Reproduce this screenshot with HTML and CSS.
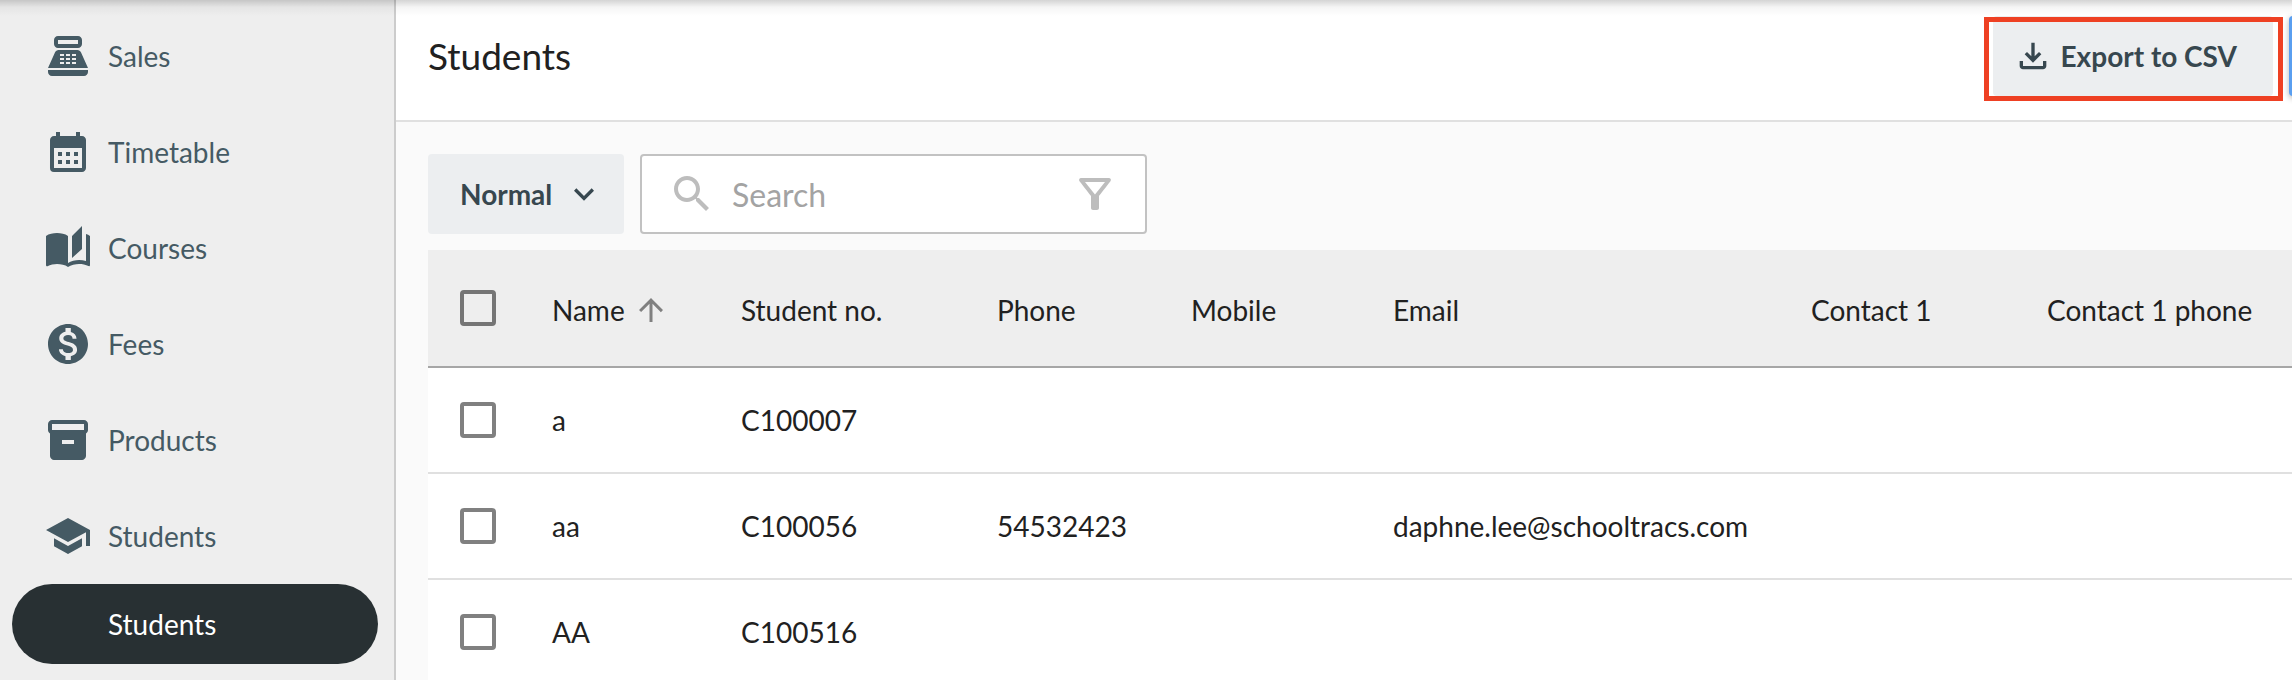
FILE: index.html
```html
<!DOCTYPE html>
<html lang="en">
<head>
  <meta charset="UTF-8">
  <meta name="viewport" content="width=device-width, initial-scale=1.0">
  <title>Students</title>
  <link rel="stylesheet" href="styles.css">
</head>
<body>
  <div class="topbar-shadow"></div>

  <nav class="sidebar">
    <a href="#sales" class="nav-item">
      <svg class="icon" viewBox="0 0 24 24"><path fill-rule="evenodd" d="M17 2H7c-1.1 0-2 .9-2 2v2c0 1.1.9 2 2 2h10c1.1 0 2-.9 2-2V4c0-1.1-.9-2-2-2zm0 4H7V4h10v2zm3 16H4c-1.1 0-2-.9-2-2v-1h20v1c0 1.1-.9 2-2 2zM18.53 10.19C18.21 9.47 17.49 9 16.7 9H7.3c-.79 0-1.51.47-1.83 1.19L2 18h20l-3.47-7.81zM8 11h2v1H8zM11 11h2v1h-2zM14 11h2v1h-2zM8 13h2v1H8zM11 13h2v1h-2zM14 13h2v1h-2zM8 15h2v1H8zM11 15h2v1h-2zM14 15h2v1h-2z"/></svg>
      Sales
    </a>
    <a href="#timetable" class="nav-item">
      <svg class="icon" viewBox="0 0 24 24"><path d="M19 4h-1V2h-2v2H8V2H6v2H5c-1.11 0-1.99.9-1.99 2L3 20a2 2 0 0 0 2 2h14c1.1 0 2-.9 2-2V6c0-1.1-.9-2-2-2zm0 16H5V10h14v10zM9 14H7v-2h2v2zm4 0h-2v-2h2v2zm4 0h-2v-2h2v2zm-8 4H7v-2h2v2zm4 0h-2v-2h2v2zm4 0h-2v-2h2v2z"/></svg>
      Timetable
    </a>
    <a href="#courses" class="nav-item">
      <svg class="icon" viewBox="0 0 24 24"><path d="M19 1l-5 5v11l5-4.5V1zM1 6v14.65c0 .25.25.5.5.5.1 0 .15-.05.25-.05C3.1 20.45 5.05 20 6.5 20c1.95 0 4.05.4 5.5 1.5V6c-1.45-1.1-3.55-1.5-5.5-1.5S2.45 4.9 1 6zm22 13.5V6c-.6-.45-1.25-.75-2-1v13.5c-1.1-.35-2.3-.5-3.5-.5-1.7 0-4.15.65-5.5 1.5v2c1.35-.85 3.8-1.5 5.5-1.5 1.65 0 3.35.3 4.75 1.05.1.05.15.05.25.05.25 0 .5-.25.5-.5v-1.1z"/></svg>
      Courses
    </a>
    <a href="#fees" class="nav-item">
      <svg class="icon" viewBox="0 0 24 24"><path d="M12 2C6.48 2 2 6.48 2 12s4.48 10 10 10 10-4.48 10-10S17.52 2 12 2zm1.41 16.09V20h-2.67v-1.93c-1.71-.36-3.16-1.46-3.27-3.4h1.96c.1 1.05.82 1.87 2.65 1.87 1.96 0 2.4-.98 2.4-1.59 0-.83-.44-1.61-2.67-2.14-2.48-.6-4.18-1.62-4.18-3.67 0-1.72 1.39-2.84 3.11-3.21V4h2.67v1.95c1.86.45 2.79 1.86 2.85 3.39H14.3c-.05-1.11-.64-1.87-2.22-1.87-1.5 0-2.4.68-2.4 1.64 0 .84.65 1.39 2.67 1.91s4.18 1.39 4.18 3.91c-.01 1.83-1.38 2.83-3.12 3.16z"/></svg>
      Fees
    </a>
    <a href="#products" class="nav-item">
      <svg class="icon" viewBox="0 0 24 24"><path d="M20 2H4c-1 0-2 .9-2 2v3.01c0 .72.43 1.34 1 1.69V20c0 1.1 1.1 2 2 2h14c.9 0 2-.9 2-2V8.7c.57-.35 1-.97 1-1.69V4c0-1.1-1-2-2-2zm-5 12H9v-2h6v2zm5-7H4V4h16v3z"/></svg>
      Products
    </a>
    <a href="#students" class="nav-item">
      <svg class="icon" viewBox="0 0 24 24"><path d="M5 13.18v4L12 21l7-3.82v-4L12 17l-7-3.82zM12 3L1 9l11 6 9-4.91V17h2V9L12 3z"/></svg>
      Students
    </a>
    <a href="#students-list" class="nav-sub active">Students</a>
  </nav>

  <main class="main">
    <header class="page-header">
      <h1>Students</h1>
      <div class="actions">
        <button type="button" class="btn export-btn">
          <svg class="icon-sm" viewBox="0 0 24 24"><path d="M12 16l-5-5 1.4-1.45 2.6 2.6V4h2v8.15l2.6-2.6L17 11l-5 5zm-6 4q-.825 0-1.412-.587Q4 18.825 4 18v-3h2v3h12v-3h2v3q0 .825-.587 1.413Q18.825 20 18 20z"/></svg>
          Export to CSV
          <span class="highlight"></span>
        </button>
        <button type="button" class="btn primary-btn" aria-label="Add student"></button>
      </div>
    </header>

    <section class="content">
      <div class="toolbar">
        <div class="status-select">
          <select class="btn" aria-label="Status">
            <option>Normal</option>
          </select>
          <svg class="icon-sm" viewBox="0 0 24 24"><path d="M7.41 8.59 12 13.17l4.59-4.58L18 10l-6 6-6-6z"/></svg>
        </div>
        <div class="search-box">
          <svg class="icon" viewBox="0 0 24 24"><path d="M15.5 14h-.79l-.28-.27C15.41 12.59 16 11.11 16 9.5 16 5.91 13.09 3 9.5 3S3 5.91 3 9.5 5.91 16 9.5 16c1.61 0 3.09-.59 4.23-1.57l.27.28v.79l5 4.99L20.49 19l-4.99-5zm-6 0C7.01 14 5 11.99 5 9.5S7.01 5 9.5 5 14 7.01 14 9.5 11.99 14 9.5 14z"/></svg>
          <input type="text" placeholder="Search" aria-label="Search">
          <button type="button" class="filter-btn" aria-label="Filter">
            <svg class="icon" viewBox="0 0 24 24"><path d="M7 6h10l-5.01 6.3L7 6zm-2.75-.39C6.27 8.2 10 13 10 13v6c0 .55.45 1 1 1h2c.55 0 1-.45 1-1v-6s3.72-4.8 5.74-7.39A.998.998 0 0 0 18.95 4H5.04c-.83 0-1.3.95-.79 1.61z"/></svg>
          </button>
        </div>
      </div>

      <table class="students">
        <colgroup>
          <col class="col-check">
          <col class="col-name">
          <col class="col-no">
          <col class="col-phone">
          <col class="col-mobile">
          <col class="col-email">
          <col class="col-contact">
          <col>
        </colgroup>
        <thead>
          <tr>
            <td><input type="checkbox" aria-label="Select all"></td>
            <th>
              <span class="sort">Name
                <svg class="icon-sort" viewBox="0 0 24 24"><path d="M4 12l1.41 1.41L11 7.83V20h2V7.83l5.58 5.59L20 12l-8-8-8 8z"/></svg>
              </span>
            </th>
            <th>Student no.</th>
            <th>Phone</th>
            <th>Mobile</th>
            <th>Email</th>
            <th>Contact 1</th>
            <th>Contact 1 phone</th>
          </tr>
        </thead>
        <tbody>
          <tr>
            <td><input type="checkbox" aria-label="Select a"></td>
            <td>a</td>
            <td>C100007</td>
            <td></td>
            <td></td>
            <td></td>
            <td></td>
            <td></td>
          </tr>
          <tr>
            <td><input type="checkbox" aria-label="Select aa"></td>
            <td>aa</td>
            <td>C100056</td>
            <td>54532423</td>
            <td></td>
            <td>daphne.lee@schooltracs.com</td>
            <td></td>
            <td></td>
          </tr>
          <tr>
            <td><input type="checkbox" aria-label="Select AA"></td>
            <td>AA</td>
            <td>C100516</td>
            <td></td>
            <td></td>
            <td></td>
            <td></td>
            <td></td>
          </tr>
        </tbody>
      </table>
    </section>
  </main>
</body>
</html>
```

FILE: styles.css
```css
* {
  box-sizing: border-box;
}

body {
  margin: 0;
  display: flex;
  height: 100vh;
  overflow: hidden;
  font-family: Lato, "Liberation Sans", sans-serif;
  font-size: 28px;
  color: #212121;
  background: #fafafa;
}

button, input, select {
  font-family: inherit;
  font-size: inherit;
}

svg {
  fill: currentColor;
  flex-shrink: 0;
}

.icon {
  width: 48px;
  height: 48px;
}

.icon-sm {
  width: 40px;
  height: 40px;
}

/* shadow of the app bar above the page */
.topbar-shadow {
  position: absolute;
  top: 0;
  left: 0;
  right: 0;
  height: 16px;
  background: linear-gradient(rgba(0, 0, 0, 0.17), rgba(0, 0, 0, 0.04) 45%, transparent);
  pointer-events: none;
  z-index: 10;
}

/* sidebar */
.sidebar {
  width: 396px;
  flex-shrink: 0;
  padding-top: 8px;
  background: #eee;
  border-right: 2px solid #ccc;
}

.nav-item {
  display: flex;
  align-items: center;
  gap: 16px;
  height: 96px;
  padding: 0 44px;
  color: #455a64;
  text-decoration: none;
}

.nav-sub {
  display: flex;
  align-items: center;
  height: 80px;
  margin: 0 16px 0 12px;
  padding-left: 96px;
  border-radius: 40px;
  color: #455a64;
  text-decoration: none;
}

.nav-sub.active {
  background: #283033;
  color: #fff;
}

/* page header */
.main {
  flex: 1;
  min-width: 0;
  overflow: hidden;
}

.page-header {
  display: flex;
  align-items: flex-start;
  justify-content: space-between;
  height: 122px;
  padding: 16px 0 0 32px;
  background: #fff;
  border-bottom: 2px solid #e0e0e0;
}

.page-header h1 {
  margin: 0;
  font-size: 37px;
  font-weight: 400;
  line-height: 80px;
}

.actions {
  display: flex;
  gap: 16px;
}

.btn {
  height: 80px;
  border: none;
  border-radius: 4px;
  background: #eceef0;
  color: #37474f;
  font-weight: 700;
  cursor: pointer;
}

.export-btn {
  position: relative;
  display: flex;
  align-items: center;
  gap: 8px;
  padding: 0 36px 0 20px;
}

.highlight {
  position: absolute;
  top: 1px;
  right: -10px;
  bottom: -5px;
  left: -9px;
  border: 5px solid #ee4023;
}

/* the rest of this button runs past the right edge */
.primary-btn {
  width: 160px;
  margin-right: -157px;
  background: #5a9ff0;
  box-shadow: 0 2px 6px rgba(0, 0, 0, 0.3);
}

/* toolbar */
.content {
  padding: 32px 0 0 32px;
}

.toolbar {
  display: flex;
  gap: 16px;
  margin-bottom: 16px;
}

.status-select {
  position: relative;
}

.status-select select {
  appearance: none;
  width: 196px;
  padding: 0 64px 0 32px;
}

.status-select svg {
  position: absolute;
  top: 20px;
  right: 20px;
  color: #37474f;
  pointer-events: none;
}

.search-box {
  display: flex;
  align-items: center;
  gap: 16px;
  width: 507px;
  height: 80px;
  padding: 0 26px;
  border: 2px solid #c2c2c2;
  border-radius: 4px;
  background: #fff;
  color: #bdbdbd;
}

.search-box input {
  flex: 1;
  min-width: 0;
  padding: 0;
  border: none;
  outline: none;
  font-size: 32px;
  color: #212121;
}

.search-box input::placeholder {
  color: #a3a3a3;
}

.filter-btn {
  display: flex;
  padding: 0;
  border: none;
  background: none;
  color: inherit;
  cursor: pointer;
}

/* table */
.students {
  width: 100%;
  table-layout: fixed;
  border-collapse: separate;
  border-spacing: 0;
  background: #fff;
}

.students th,
.students td {
  height: 106px;
  padding: 0 0 0 32px;
  border-bottom: 2px solid #e0e0e0;
  font-weight: 400;
  text-align: left;
  white-space: nowrap;
}

.students thead th,
.students thead td {
  height: 118px;
  background: #eee;
  border-bottom-color: #a6a6a6;
}

.students thead th {
  padding-top: 4px;
}

.students input {
  appearance: none;
  display: block;
  width: 36px;
  height: 36px;
  margin: 0;
  border: 4px solid #808080;
  border-radius: 4px;
}

.students thead input {
  border-color: #757575;
}

.sort {
  display: flex;
  align-items: center;
  gap: 8px;
}

.icon-sort {
  width: 36px;
  height: 36px;
  color: #808080;
}

.col-check { width: 92px; }
.col-name { width: 189px; }
.col-no { width: 256px; }
.col-phone { width: 194px; }
.col-mobile { width: 202px; }
.col-email { width: 418px; }
.col-contact { width: 236px; }
```
